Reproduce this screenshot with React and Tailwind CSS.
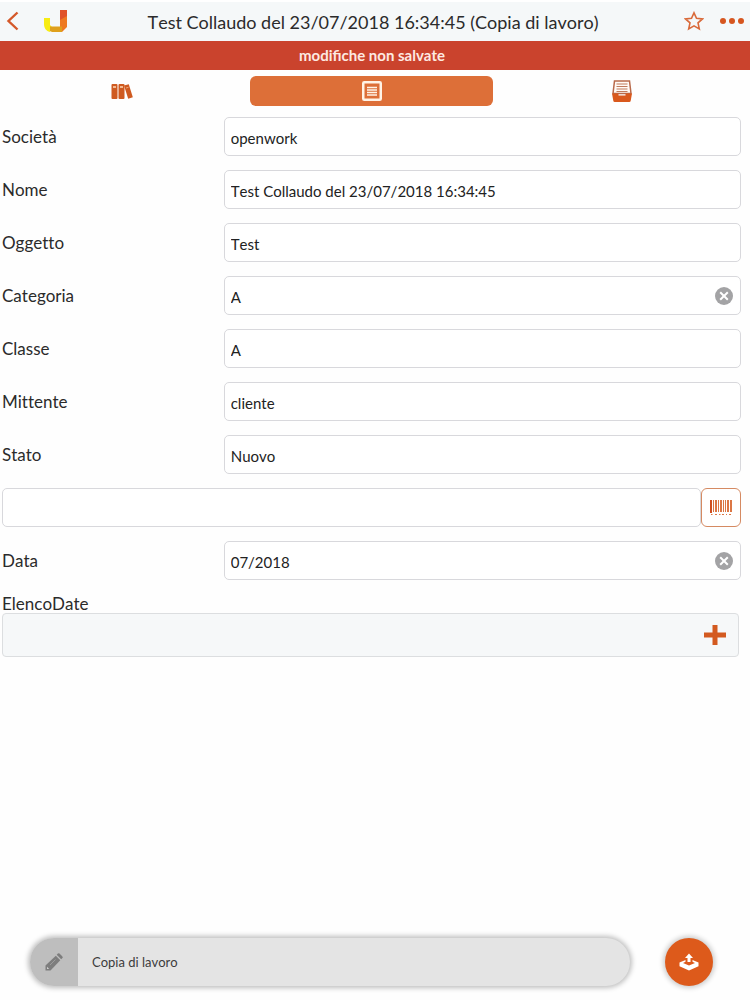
import { useState } from 'react';

const initialFields = [
  { id: 'societa', label: 'Società', value: 'openwork' },
  { id: 'nome', label: 'Nome', value: 'Test Collaudo del 23/07/2018 16:34:45' },
  { id: 'oggetto', label: 'Oggetto', value: 'Test' },
  { id: 'categoria', label: 'Categoria', value: 'A', clearable: true },
  { id: 'classe', label: 'Classe', value: 'A' },
  { id: 'mittente', label: 'Mittente', value: 'cliente' },
  { id: 'stato', label: 'Stato', value: 'Nuovo' },
  { id: 'barcode', value: '', barcode: true },
  { id: 'data', label: 'Data', value: '07/2018', clearable: true },
];

const inputStyle = 'block h-[39px] w-full min-w-0 rounded-[5px] border border-[#d8d8dc] bg-white px-1.5 pt-0.5 text-[15px] text-[#222222] outline-none';

const Logo = () => (
  <svg width="24" height="24" viewBox="0 0 24 24">
    <path d="M0 9h6v7l2 2-2 5C2 22 0 19 0 15z" fill="#f7ec13" />
    <path d="M16 1h7v14l-7 3z" fill="#e0532a" />
    <path d="M16 11l7-4v11l-5 5-2-4z" fill="#ee7a22" />
    <path d="M6 17.500h12V23H8l-2-1z" fill="#dfa01c" />
  </svg>
);

const BooksIcon = () => (
  <svg width="22" height="16" viewBox="0 0 22 16" fill="#cf5a20">
    <rect x="0.500" y="1" width="6" height="15" rx="1" />
    <rect x="7.500" y="1" width="6" height="15" rx="1" />
    <path d="M13 2.600l4.800-1.400 4 13-4.600 1.500z" />
    <path d="M2 4h3M9 4h3" stroke="#ffd9b5" strokeWidth="1.600" />
    <path d="M15 5l2.500-.7" stroke="#eba377" strokeWidth="1" />
  </svg>
);

const FormIcon = () => (
  <svg width="20" height="20" viewBox="0 0 20 20" fill="none" stroke="#fff3e6">
    <rect x="1.250" y="1.250" width="17.500" height="17.500" rx="1" strokeWidth="2.500" />
    <path d="M5 6.500h10M5 9h10M5 11.500h10M5 14h10" strokeWidth="1.600" />
  </svg>
);

const TrayIcon = () => (
  <svg width="22" height="22" viewBox="0 0 22 22">
    <path d="M3.500 1h15l1.500 12.500H2z" fill="#fffaf5" stroke="#b8694a" strokeWidth="1.500" />
    <path d="M5.500 4h11M5.500 6.500h11M5.500 9h11M5.500 11.500h11" stroke="#c07a5c" strokeWidth="1.100" />
    <path d="M1 13.500h6.500v2h7v-2H21l-1.300 7.200q-.2 1.200-1.400 1.200H3.700q-1.200 0-1.400-1.200z" fill="#d9581c" />
  </svg>
);

const BarcodeIcon = () => (
  <svg width="22" height="16" viewBox="0 0 22 16" fill="#dc7745">
    <rect x="0" y="0" width="2" height="13" fill="#cf4f20" />
    <rect x="3" y="0" width="1" height="12" />
    <rect x="5" y="0" width="2" height="12" />
    <rect x="8" y="0" width="1" height="12" />
    <rect x="10" y="0" width="2" height="12" />
    <rect x="13" y="0" width="1" height="12" />
    <rect x="15" y="0" width="1" height="12" />
    <rect x="17" y="0" width="2" height="12" />
    <rect x="20" y="0" width="2" height="12" />
    <path d="M1 14.500h1.500M5 14.500h2M9 14.500h1.500M12 14.500h2M16 14.500h1M19 14.500h2" stroke="#dc7745" />
  </svg>
);

const ClearIcon = () => (
  <svg width="18" height="18" viewBox="0 0 18 18">
    <circle cx="9" cy="9" r="9" fill="#a3a3a5" />
    <path d="M5.200 5.200l7.600 7.600M12.800 5.200l-7.600 7.600" stroke="#fff" strokeWidth="2" />
  </svg>
);

const PencilIcon = () => (
  <svg width="18" height="18" viewBox="0 0 18 18" fill="#7d7d7d">
    <path d="M0.500 12.500L10.800 2.700l4.500 4.500L5.500 17.500H.5z" />
    <path d="M11.700 1.800L12.900.6q.8-.7 1.600 0l2.900 2.900q.7.800 0 1.600l-1.200 1.200z" />
    <path d="M2 13.800l2.200 2.200H2z" fill="#d0d0d0" />
    <path d="M5 12l5.500-5.500" stroke="#a5a5a5" strokeWidth=".8" />
  </svg>
);

const UploadIcon = () => (
  <svg width="20" height="18" viewBox="0 0 20 18" fill="#fff">
    <path d="M10 .5l4 4.500h-2.500v4h-3V5H6z" />
    <path d="M6.500 7L.5 9.500v3.700L10 17.500l9.500-4.300V9.500L13.500 7v1.800l2.500 1.100-6 2.600-6-2.600 2.500-1.100z" />
  </svg>
);

const App = () => {
  const [fields, setFields] = useState(initialFields);

  const updateField = (id, value) => {
    setFields(fields.map(f => (f.id === id ? { ...f, value } : f)));
  };

  return (
    <div className="flex min-h-screen flex-col bg-[#fefefe] font-[Lato,sans-serif] text-[#2b2b2b] [font-kerning:none] [font-variant-ligatures:none]">
      <header className="flex h-[41px] items-center border-t-2 border-white bg-[#f5f8f9] px-1.5 pb-0.5">
        <div className="flex w-[70px] items-center gap-6">
          <button type="button" aria-label="Indietro">
            <svg width="14" height="20" viewBox="0 0 14 20" fill="none" stroke="#d4592a" strokeWidth="2.400">
              <path d="M11.500 1.500L2.500 10l9 8.500" />
            </svg>
          </button>
          <Logo />
        </div>
        <h1 className="flex-1 pt-0.5 text-center text-lg">Test Collaudo del 23/07/2018 16:34:45 (Copia di lavoro)</h1>
        <div className="flex w-[74px] items-center justify-end gap-4">
          <button type="button" aria-label="Preferiti">
            <svg width="20" height="20" viewBox="0 0 20 20" fill="none" stroke="#d96a3a" strokeWidth="1.600">
              <path d="M10 1.800l2.500 5.500 6 .6-4.500 4 1.300 6L10 14.900l-5.300 3 1.300-6-4.500-4 6-.6z" />
            </svg>
          </button>
          <button type="button" aria-label="Altro">
            <svg width="24" height="6" viewBox="0 0 24 6" fill="#d6561f">
              <circle cx="3" cy="3" r="3" />
              <circle cx="12" cy="3" r="3" />
              <circle cx="21" cy="3" r="3" />
            </svg>
          </button>
        </div>
      </header>

      <div className="flex h-[29px] items-center justify-center bg-[#ca432d] pr-1.5 text-[15px] font-bold text-[#fdeae2] [font-variant-ligatures:normal]">
        modifiche non salvate
      </div>

      <nav className="grid grid-cols-3 gap-[7px] pt-1.5 pr-[7px]">
        <button type="button" aria-label="Archivi" className="flex h-[30px] items-center justify-center rounded-md">
          <BooksIcon />
        </button>
        <button type="button" aria-label="Scheda" className="flex h-[30px] items-center justify-center rounded-md bg-[#dd6f38]">
          <FormIcon />
        </button>
        <button type="button" aria-label="Documenti" className="flex h-[30px] items-center justify-center rounded-md">
          <TrayIcon />
        </button>
      </nav>

      <main className="pt-[11px] pr-[9px] pl-0.5">
        <div className="flex flex-col gap-[14px]">
          {fields.map(field => field.barcode ? (
            <div key={field.id} className="flex">
              <input aria-label="Codice a barre" value={field.value} onChange={e => updateField(field.id, e.target.value)} className={inputStyle} />
              <button type="button" aria-label="Scansiona" className="flex h-[39px] w-10 shrink-0 items-center justify-center rounded-md border border-[#d58a62] bg-white">
                <BarcodeIcon />
              </button>
            </div>
          ) : (
            <div key={field.id} className="flex items-center">
              <label htmlFor={field.id} className="w-[30%] shrink-0 text-[17px]">{field.label}</label>
              <div className="relative flex-1">
                <input id={field.id} value={field.value} onChange={e => updateField(field.id, e.target.value)} className={inputStyle} />
                {field.clearable && (
                  <button type="button" aria-label={`Cancella ${field.label}`} onClick={() => updateField(field.id, '')} className="absolute top-1/2 right-2 -translate-y-1/2">
                    <ClearIcon />
                  </button>
                )}
              </div>
            </div>
          ))}
        </div>

        <h2 className="pt-[15px] text-[17px] leading-[18px]">ElencoDate</h2>
        <div className="mr-0.5 flex h-11 items-center justify-end rounded-[4px] border border-[#dcdee0] bg-[#f6f8f9] pr-3">
          <button type="button" aria-label="Aggiungi data">
            <svg width="22" height="22" viewBox="0 0 22 22" fill="#d35a20">
              <path d="M8.500 1h5v7.500H22v5h-8.500V21h-5v-7.500H0v-5h8.500z" />
            </svg>
          </button>
        </div>
      </main>

      <footer className="mt-auto flex items-center gap-[35px] pr-[37px] pb-3.5 pl-[30px]">
        <div className="flex h-12 flex-1 items-center overflow-hidden rounded-full bg-[#e4e4e4] shadow-[0_0_5px_2px_rgba(0,0,0,0.25)]">
          <button type="button" aria-label="Modifica" className="flex h-12 w-12 items-center justify-center bg-[#bebebe]">
            <PencilIcon />
          </button>
          <span className="pt-0.5 pl-3.5 text-[13px] text-[#3c3c3c]">Copia di lavoro</span>
        </div>
        <button type="button" aria-label="Invia" className="flex h-12 w-12 items-center justify-center rounded-full bg-[#dd5a1b] shadow-[0_0_5px_2px_rgba(0,0,0,0.2)]">
          <UploadIcon />
        </button>
      </footer>
    </div>
  );
};

export default App;
